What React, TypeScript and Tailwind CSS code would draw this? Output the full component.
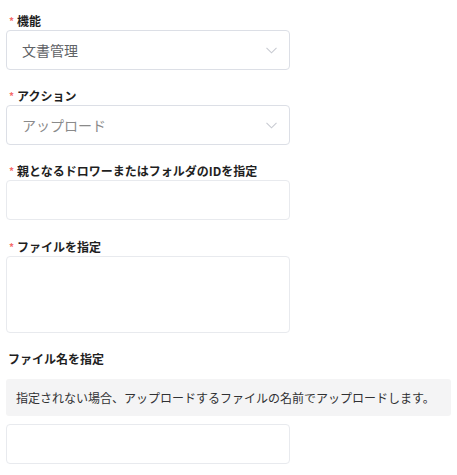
const font = { fontFamily: '"Noto Sans CJK JP", "Noto Sans", sans-serif' };

function Label({ text, required = true }: { text: string; required?: boolean }) {
  return (
    <div className="flex h-[18px] items-center text-[12px] font-bold leading-[18px] text-[#1f1f1f]">
      {required && <span className="ml-[3px] mr-[3px] text-[10px] text-[#f56c6c]">*</span>}
      <span className={required ? "" : "ml-[2px]"}>{text}</span>
    </div>
  );
}

function Select({ value, color }: { value: string; color: string }) {
  return (
    <div className="flex h-[40px] w-[284px] items-center justify-between rounded-[4px] border border-[#dcdfe6] bg-white pl-[15px] pr-[12px]">
      <span className={`text-[14px] ${color}`}>{value}</span>
      <svg width="11" height="7" viewBox="0 0 11 7" fill="none" className="mt-[1px]">
        <path d="M0.5 0.8 L5.5 5.8 L10.5 0.8" stroke="#c8cbd2" strokeWidth="1.1" />
      </svg>
    </div>
  );
}

function Input({ tall = false }: { tall?: boolean }) {
  return (
    <div
      className={`w-[284px] rounded-[4px] border border-[#e8eaee] bg-white ${
        tall ? "h-[77px]" : "h-[40px]"
      }`}
    />
  );
}

export default function App() {
  return (
    <div className="min-h-screen bg-white pl-[6px] pt-[12px]" style={font}>
      <Label text="機能" />
      <Select value="文書管理" color="text-[#606266]" />

      <div className="mt-[17px]">
        <Label text="アクション" />
        <Select value="アップロード" color="text-[#8a8a8a]" />
      </div>

      <div className="mt-[17px]">
        <Label text="親となるドロワーまたはフォルダのIDを指定" />
        <Input />
      </div>

      <div className="mt-[18px]">
        <Label text="ファイルを指定" />
        <Input tall />
      </div>

      <div className="mt-[17px]">
        <Label text="ファイル名を指定" required={false} />
        <div className="mt-[11px] mr-[6px] flex h-[37px] items-center rounded-[3px] bg-[#f4f4f5] pl-[10px] text-[12px] text-[#303133]">
          指定されない場合、アップロードするファイルの名前でアップロードします。
        </div>
        <div className="mt-[8px]">
          <Input />
        </div>
      </div>
    </div>
  );
}
